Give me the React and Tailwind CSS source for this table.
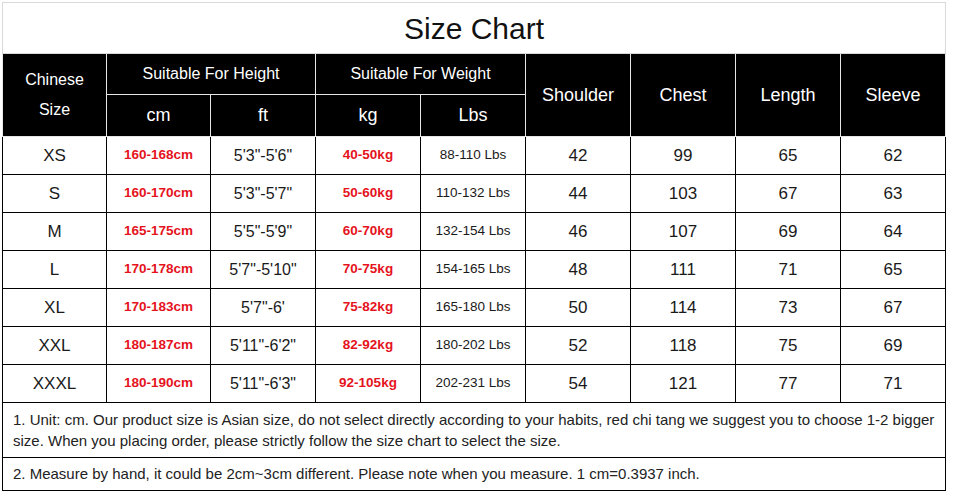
import React from 'react'

const rows = [
  ['XS', '160-168cm', `5'3"-5'6"`, '40-50kg', '88-110 Lbs', '42', '99', '65', '62'],
  ['S', '160-170cm', `5'3"-5'7"`, '50-60kg', '110-132 Lbs', '44', '103', '67', '63'],
  ['M', '165-175cm', `5'5"-5'9"`, '60-70kg', '132-154 Lbs', '46', '107', '69', '64'],
  ['L', '170-178cm', `5'7"-5'10"`, '70-75kg', '154-165 Lbs', '48', '111', '71', '65'],
  ['XL', '170-183cm', `5'7"-6'`, '75-82kg', '165-180 Lbs', '50', '114', '73', '67'],
  ['XXL', '180-187cm', `5'11"-6'2"`, '82-92kg', '180-202 Lbs', '52', '118', '75', '69'],
  ['XXXL', '180-190cm', `5'11"-6'3"`, '92-105kg', '202-231 Lbs', '54', '121', '77', '71'],
]

const head = 'bg-black text-white font-normal border border-[#e6e6e6] p-0 text-center align-middle'
const cell = 'border border-black p-0 text-center align-middle'

export default function App() {
  return (
    <div
      className="min-h-screen bg-white pt-[2px] pl-[2px]"
      style={{ fontFamily: '"Liberation Sans", Arial, sans-serif' }}
    >
      <table className="table-fixed border-collapse w-[944px] text-[#1a1a1a]">
        <colgroup>
          <col className="w-[104px]" />
          <col className="w-[104px]" />
          <col className="w-[105px]" />
          <col className="w-[105px]" />
          <col className="w-[105px]" />
          <col className="w-[105px]" />
          <col className="w-[105px]" />
          <col className="w-[105px]" />
          <col className="w-[105px]" />
        </colgroup>
        <tbody>
          <tr className="h-[51px]">
            <td colSpan={9} className="border border-[#d9d9d9] text-center align-middle text-[30px] text-[#111]">
              Size Chart
            </td>
          </tr>
          <tr className="h-[41px]">
            <th rowSpan={2} className={`${head} text-[16px] leading-[30px]`}>
              Chinese
              <br />
              Size
            </th>
            <th colSpan={2} className={`${head} text-[16px]`}>Suitable For Height</th>
            <th colSpan={2} className={`${head} text-[16px]`}>Suitable For Weight</th>
            <th rowSpan={2} className={`${head} text-[18px]`}>Shoulder</th>
            <th rowSpan={2} className={`${head} text-[18px]`}>Chest</th>
            <th rowSpan={2} className={`${head} text-[18px]`}>Length</th>
            <th rowSpan={2} className={`${head} text-[18px]`}>Sleeve</th>
          </tr>
          <tr className="h-[42px]">
            <th className={`${head} text-[18px]`}>cm</th>
            <th className={`${head} text-[18px]`}>ft</th>
            <th className={`${head} text-[18px]`}>kg</th>
            <th className={`${head} text-[18px]`}>Lbs</th>
          </tr>
          {rows.map((r) => (
            <tr key={r[0]} className="h-[38px]">
              <td className={`${cell} text-[17px]`}>{r[0]}</td>
              <td className={`${cell} text-[13.5px] font-bold text-[#e5131d]`}>{r[1]}</td>
              <td className={`${cell} text-[16px]`}>{r[2]}</td>
              <td className={`${cell} text-[13.5px] font-bold text-[#e5131d]`}>{r[3]}</td>
              <td className={`${cell} text-[13.5px]`}>{r[4]}</td>
              <td className={`${cell} text-[17px]`}>{r[5]}</td>
              <td className={`${cell} text-[17px]`}>{r[6]}</td>
              <td className={`${cell} text-[17px]`}>{r[7]}</td>
              <td className={`${cell} text-[17px]`}>{r[8]}</td>
            </tr>
          ))}
          <tr className="h-[55px]">
            <td colSpan={9} className="border border-black text-left align-middle pl-[10px] text-[15px] leading-[21px] text-[#222]">
              1. Unit: cm. Our product size is Asian size, do not select directly according to your habits, red chi tang we suggest you to choose 1-2 bigger
              <br />
              size. When you placing order, please strictly follow the size chart to select the size.
            </td>
          </tr>
          <tr className="h-[33px]">
            <td colSpan={9} className="border border-black text-left align-middle pl-[10px] text-[15px] text-[#222]">
              2. Measure by hand, it could be 2cm~3cm different. Please note when you measure. 1 cm=0.3937 inch.
            </td>
          </tr>
        </tbody>
      </table>
    </div>
  )
}
